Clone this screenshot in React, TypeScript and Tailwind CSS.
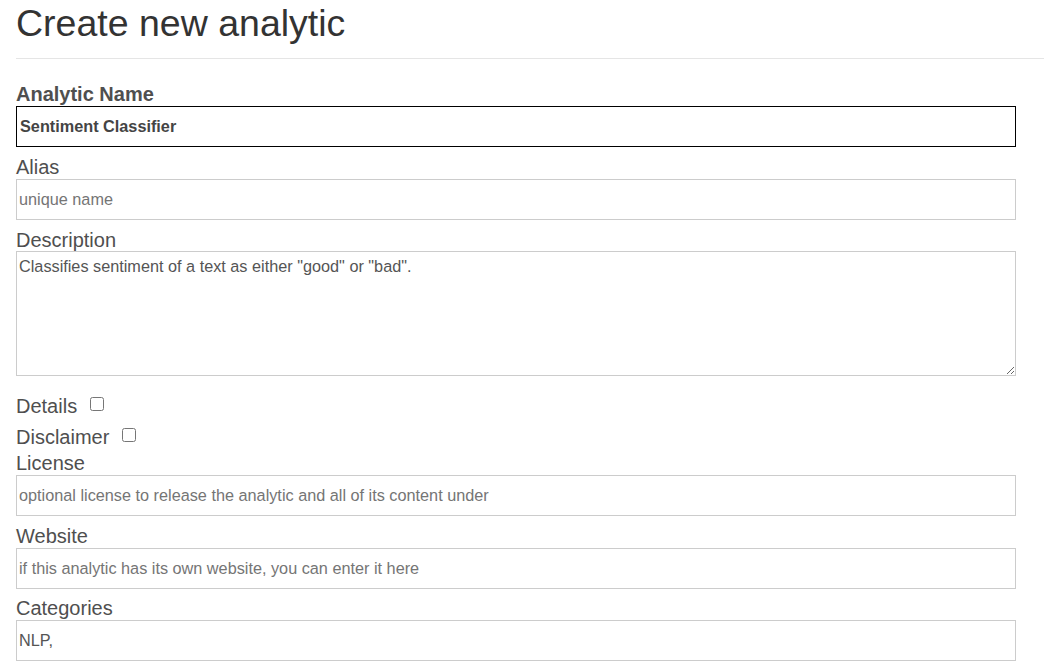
import React from "react";

const labelCls = "block text-[20px] leading-[21px] pt-[2px] text-[#4f4f4f]";
const inputCls =
    "block w-[1000px] h-[41px] mt-[1px] px-[2px] text-[16.25px] text-[#555] border border-[#ccc] bg-white placeholder:text-[#757575] outline-none";

export default function App() {
    return (
        <div
            className="pl-4 bg-white min-h-screen text-[#333]"
            style={{ fontFamily: '"Liberation Sans", Arial, sans-serif' }}
        >
            <h1 className="pt-[3px] text-[37.5px] leading-[41px] font-normal text-[#333]">
                Create new analytic
            </h1>
            <hr className="mt-[14px] border-t border-[#e5e5e5]" />

            {/* NAME */}
            <label className={labelCls + " mt-[23px] font-bold"}>Analytic Name</label>
            <input
                type="text"
                defaultValue="Sentiment Classifier"
                className="block w-[1000px] h-[41px] mt-[1px] px-[3px] text-[16.25px] font-bold text-[#444] border border-black bg-white outline-none"
            />

            <label className={labelCls + " mt-[8px]"}>Alias</label>
            <input type="text" placeholder="unique name" className={inputCls} />

            <label className={labelCls + " mt-[8px]"}>Description</label>
            <textarea
                defaultValue={'Classifies sentiment of a text as either "good" or "bad".'}
                className="block w-[1000px] h-[125px] p-[2px] text-[16.25px] text-[#555] border border-[#ccc] bg-white outline-none"
            />

            {/* CHECKBOXES */}
            <div className="flex items-start mt-[18px]">
                <label className={labelCls}>Details</label>
                <input type="checkbox" className="ml-[13px] mt-[3px] w-[14px] h-[14px]" />
            </div>
            <div className="flex items-start mt-[8px]">
                <label className={labelCls}>Disclaimer</label>
                <input type="checkbox" className="ml-[13px] mt-[3px] w-[14px] h-[14px]" />
            </div>

            <label className={labelCls + " mt-[3px]"}>License</label>
            <input
                type="text"
                placeholder="optional license to release the analytic and all of its content under"
                className={inputCls}
            />

            <label className={labelCls + " mt-[8px]"}>Website</label>
            <input
                type="text"
                placeholder="if this analytic has its own website, you can enter it here"
                className={inputCls}
            />

            <label className={labelCls + " mt-[7px]"}>Categories</label>
            <input type="text" defaultValue="NLP," className={inputCls} />
        </div>
    );
}
